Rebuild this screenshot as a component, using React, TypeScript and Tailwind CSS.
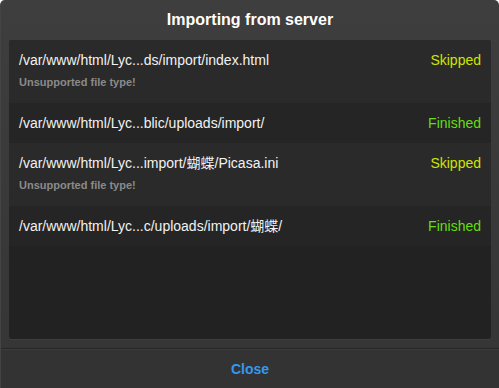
const items = [
  { path: "/var/www/html/Lyc...ds/import/index.html", status: "Skipped", note: "Unsupported file type!" },
  { path: "/var/www/html/Lyc...blic/uploads/import/", status: "Finished" },
  { path: "/var/www/html/Lyc...import/蝴蝶/Picasa.ini", status: "Skipped", note: "Unsupported file type!" },
  { path: "/var/www/html/Lyc...c/uploads/import/蝴蝶/", status: "Finished" },
];

export default function App() {
  return (
    <div
      className="w-[499px] h-[388px] flex flex-col rounded-t-[5px] overflow-hidden bg-gradient-to-b from-[#3e3e3e] to-[#353535] border-l border-[#444]"
      style={{ fontFamily: '"Liberation Sans", Arial, "Noto Sans CJK SC", sans-serif' }}
    >
      {/* Header */}
      <div className="h-[40px] flex items-center justify-center">
        <h1 className="text-[16px] font-bold text-white leading-none">Importing from server</h1>
      </div>

      {/* List */}
      <div className="mx-2 h-[299px] rounded-[3px] bg-[#222] overflow-hidden shadow-[0_1px_0_rgba(255,255,255,0.04)]">
        {items.map((item, i) => (
          <div
            key={i}
            className={`px-[10px] pt-[12px] ${item.note ? "pb-[14px]" : "pb-[12px]"} ${
              i % 2 === 0 ? "bg-[#2a2a2a]" : "bg-[#252525]"
            }`}
          >
            <div className="flex items-center justify-between text-[14px] leading-[16px]">
              <span className="text-[#f2f2f2]">{item.path}</span>
              <span className={item.status === "Skipped" ? "text-[#d0e400]" : "text-[#66dd11]"}>
                {item.status}
              </span>
            </div>
            {item.note && (
              <div className="mt-[7px] text-[11px] leading-[14px] font-bold text-[#8a8a8a]">{item.note}</div>
            )}
          </div>
        ))}
      </div>

      {/* Footer */}
      <div className="mt-[9px] pt-[2px] flex-1 flex items-center justify-center bg-[#333] border-t border-[#262626] shadow-[inset_0_1px_0_#3c3c3c]">
        <button className="text-[14px] font-bold text-[#3399f0]">Close</button>
      </div>
    </div>
  );
}
